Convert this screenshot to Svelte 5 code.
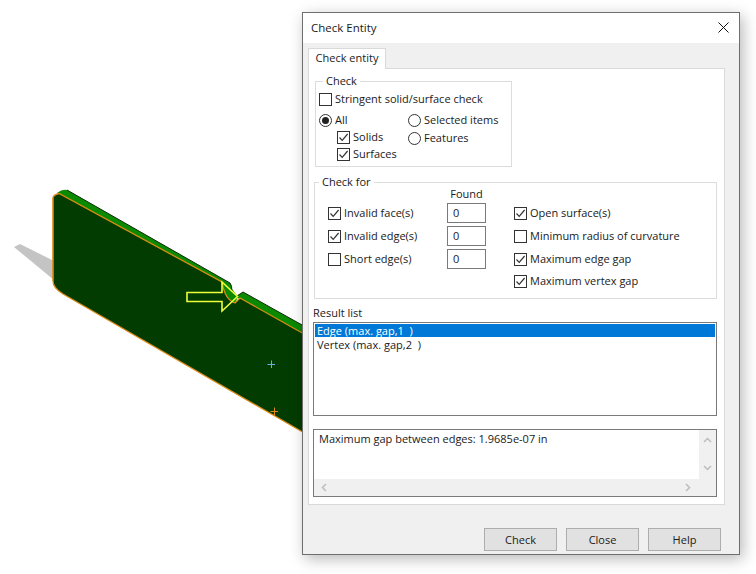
<script>
  const leftRows = [
    { label: 'Invalid face(s)', checked: true },
    { label: 'Invalid edge(s)', checked: true },
    { label: 'Short edge(s)', checked: false }
  ];
  const rightRows = [
    { label: 'Open surface(s)', checked: true },
    { label: 'Minimum radius of curvature', checked: false },
    { label: 'Maximum edge gap', checked: true },
    { label: 'Maximum vertex gap', checked: true }
  ];
</script>

{#snippet check(label, checked)}
  <div class="opt">
    <span class="box">
      {#if checked}
        <svg width="11" height="11" viewBox="0 0 11 11"><path d="M1.5 5.5 L4.2 8.4 L9.6 2" fill="none" stroke="#333" stroke-width="1.2" /></svg>
      {/if}
    </span>
    <span>{label}</span>
  </div>
{/snippet}

{#snippet radio(label, on)}
  <div class="opt">
    <span class="radio">{#if on}<span class="dot"></span>{/if}</span>
    <span>{label}</span>
  </div>
{/snippet}

<div class="canvas">
  <svg class="art" width="756" height="574" viewBox="0 0 756 574">
    <polygon points="14,247 20,244 54,261 54,280" fill="#c4c4c4" />
    <path d="M57,193 Q62,189 67,190 L230,283 Q232,285 232,292 L237,296 L243,292 L320,335 L320,345 L238,298 L224,288 L60,196 Z" fill="#0a8a00" />
    <path d="M53,198 Q53,195 59,193.5 L222,282 Q225,300 235,303 L240,298 L320,343 L320,442 L63,294 Q53,288 53,281 Z" fill="#033c00" />
    <path d="M222,282 Q225,300 235,303 L238,297 L232,289 Z" fill="#0a8a00" />
    <path d="M67,190 L230,283 Q232,285 232,292 L237,296 L243,292 L320,335" fill="none" stroke="#0c2a06" stroke-width="1" />
    <path d="M53,198 V281" fill="none" stroke="#e08a10" stroke-width="1.6" />
    <path d="M53,198 Q53,195 59,193.5 L222,282 Q225,300 235,303 L240,298 L320,343 M320,442 L63,294 Q53,288 53,281" fill="none" stroke="#dc8c14" stroke-width="1.3" />
    <polygon points="187,292.5 222,292.5 222,282 237.5,296.5 222,311 222,301.5 187,301.5" fill="none" stroke="#eeff3c" stroke-width="1.6" />
    <path d="M267.5,364.5 H275 M271.5,360.5 V368" stroke="#62b4d8" stroke-width="1" />
    <path d="M270.5,411.5 H278 M274.5,407.5 V415" stroke="#e08a10" stroke-width="1" />
  </svg>

  <div class="dialog">
    <header class="title">
      <span>Check Entity</span>
      <svg width="11" height="11" viewBox="0 0 11 11"><path d="M0.5 0.5 L10.5 10.5 M10.5 0.5 L0.5 10.5" stroke="#111" stroke-width="1" /></svg>
    </header>

    <div class="tabs"><div class="tab">Check entity</div></div>

    <div class="panel">
      <fieldset class="g-check">
        <legend>Check</legend>
        {@render check('Stringent solid/surface check', false)}
        <div class="scope">
          <div class="scope-l">
            {@render radio('All', true)}
            <div class="indent">
              {@render check('Solids', true)}
              {@render check('Surfaces', true)}
            </div>
          </div>
          <div class="scope-r">
            {@render radio('Selected items', false)}
            {@render radio('Features', false)}
          </div>
        </div>
      </fieldset>

      <fieldset class="g-for">
        <legend>Check for</legend>
        <div class="for-grid">
          <div class="for-l">
            <div class="found">Found</div>
            {#each leftRows as r}
              <div class="for-row">
                {@render check(r.label, r.checked)}
                <div class="num">0</div>
              </div>
            {/each}
          </div>
          <div class="for-r">
            {#each rightRows as r}
              <div class="for-row-r">{@render check(r.label, r.checked)}</div>
            {/each}
          </div>
        </div>
      </fieldset>

      <div class="rl-label">Result list</div>
      <div class="list">
        <div class="li sel">Edge (max. gap,1  )</div>
        <div class="li next">Vertex (max. gap,2  )</div>
      </div>

      <div class="msg">
        <div class="msg-top">
          <div class="msg-text">Maximum gap between edges: 1.9685e-07 in</div>
          <div class="vbar">
            <svg width="9" height="6" viewBox="0 0 9 6"><path d="M1 5 L4.5 1.5 L8 5" fill="none" stroke="#bdbdbd" stroke-width="1.5" /></svg>
            <svg width="9" height="6" viewBox="0 0 9 6"><path d="M1 1 L4.5 4.5 L8 1" fill="none" stroke="#bdbdbd" stroke-width="1.5" /></svg>
          </div>
        </div>
        <div class="hbar">
          <svg width="6" height="9" viewBox="0 0 6 9"><path d="M5 1 L1.5 4.5 L5 8" fill="none" stroke="#bdbdbd" stroke-width="1.5" /></svg>
          <svg width="6" height="9" viewBox="0 0 6 9"><path d="M1 1 L4.5 4.5 L1 8" fill="none" stroke="#bdbdbd" stroke-width="1.5" /></svg>
        </div>
      </div>
    </div>

    <footer class="buttons">
      <div class="btn">Check</div>
      <div class="btn">Close</div>
      <div class="btn">Help</div>
    </footer>
  </div>
</div>

<style>
  :global(body) { margin: 0; background: #fff; }
  .canvas {
    position: relative;
    width: 756px;
    height: 574px;
    overflow: hidden;
    font-family: "Open Sans", "Noto Sans", sans-serif;
    font-size: 11px;
    color: #1a1a1a;
  }
  .art { position: absolute; left: 0; top: 0; }
  .dialog {
    position: absolute;
    left: 302px;
    top: 12px;
    width: 438px;
    height: 543px;
    box-sizing: border-box;
    border: 1px solid #6e6e6e;
    background: #f0f0f0;
    box-shadow: 3px 4px 14px rgba(0, 0, 0, 0.28);
    display: flex;
    flex-direction: column;
  }
  .title {
    height: 30px;
    flex: none;
    background: #fff;
    display: flex;
    align-items: center;
    justify-content: space-between;
    padding: 0 10px 2px 8px;
    box-sizing: border-box;
    font-size: 11.5px;
  }
  .tabs { height: 26px; flex: none; padding: 5px 0 0 5px; box-sizing: border-box; margin-bottom: -1px; position: relative; z-index: 1; }
  .tab {
    width: 78px;
    height: 21px;
    box-sizing: border-box;
    background: #fff;
    border: 1px solid #d9d9d9;
    border-bottom: none;
    text-align: center;
    line-height: 17px;
  }
  .panel {
    flex: none;
    margin-left: 5px;
    width: 417px;
    height: 437px;
    box-sizing: border-box;
    background: #fff;
    border: 1px solid #d9d9d9;
    padding: 5px 0 0 4px;
  }
  fieldset {
    margin: 0;
    padding: 0;
    border: 1px solid #dcdcdc;
    box-sizing: border-box;
    min-width: 0;
  }
  legend { padding: 0 3px; margin-left: 4px; line-height: 14px; }
  .g-check { margin-left: 2px; width: 197px; height: 93px; padding: 4px 0 0 3px; }
  .opt { display: flex; align-items: center; gap: 3px; height: 14px; line-height: 14px; white-space: nowrap; }
  .box {
    width: 13px;
    height: 13px;
    box-sizing: border-box;
    border: 1px solid #333;
    background: #fff;
    flex: none;
    display: flex;
    align-items: center;
    justify-content: center;
  }
  .radio {
    width: 13px;
    height: 13px;
    box-sizing: border-box;
    border: 1px solid #333;
    border-radius: 50%;
    background: #fff;
    flex: none;
    display: flex;
    align-items: center;
    justify-content: center;
  }
  .dot { width: 7px; height: 7px; border-radius: 50%; background: #222; }
  .scope { display: flex; margin-top: 7px; }
  .scope-l { width: 89px; display: flex; flex-direction: column; gap: 3px; }
  .indent { padding-left: 18px; display: flex; flex-direction: column; gap: 3px; }
  .scope-r { display: flex; flex-direction: column; gap: 4px; }
  .g-for { margin: 8px 0 0 1px; width: 403px; height: 124px; }
  .for-grid { display: flex; padding-left: 13px; }
  .for-l { width: 186px; }
  .found { height: 14px; line-height: 10px; margin-left: 119px; width: 39px; text-align: center; }
  .for-row { display: flex; align-items: center; justify-content: space-between; width: 158px; height: 20px; margin-bottom: 3px; }
  .num {
    width: 39px;
    height: 20px;
    box-sizing: border-box;
    border: 1px solid #7a7a7a;
    line-height: 18px;
    padding-left: 5px;
    background: #fff;
  }
  .for-r { padding-top: 14px; }
  .for-row-r { display: flex; align-items: center; height: 20px; margin-bottom: 3px; }
  .for-row-r:last-child { margin-top: -1px; }
  .rl-label { margin-top: 7px; height: 14px; line-height: 14px; }
  .list {
    margin-top: 2px;
    width: 404px;
    height: 94px;
    box-sizing: border-box;
    border: 1px solid #7a7a7a;
    background: #fff;
    padding: 1px 1px 0;
  }
  .li { height: 13px; line-height: 13px; padding-left: 2px; white-space: pre; }
  .next { margin-top: 1px; }
  .sel { background: #0078d7; color: #fff; }
  .msg {
    margin-top: 13px;
    width: 404px;
    height: 68px;
    box-sizing: border-box;
    border: 1px solid #7a7a7a;
    background: #f0f0f0;
    display: flex;
    flex-direction: column;
  }
  .msg-top { flex: 1; display: flex; min-height: 0; }
  .msg-text { flex: 1; background: #fff; padding: 2px 0 0 5px; line-height: 14px; }
  .vbar { width: 17px; display: flex; flex-direction: column; justify-content: space-between; align-items: center; padding: 7px 0 8px; box-sizing: border-box; }
  .hbar { height: 17px; flex: none; display: flex; justify-content: space-between; align-items: center; padding: 0 25px 0 7px; }
  .buttons { flex: 1; display: flex; justify-content: flex-end; gap: 9px; padding: 23px 18px 0 0; }
  .btn {
    width: 73px;
    height: 23px;
    box-sizing: border-box;
    background: #e1e1e1;
    border: 1px solid #adadad;
    text-align: center;
    line-height: 21px;
  }
</style>
